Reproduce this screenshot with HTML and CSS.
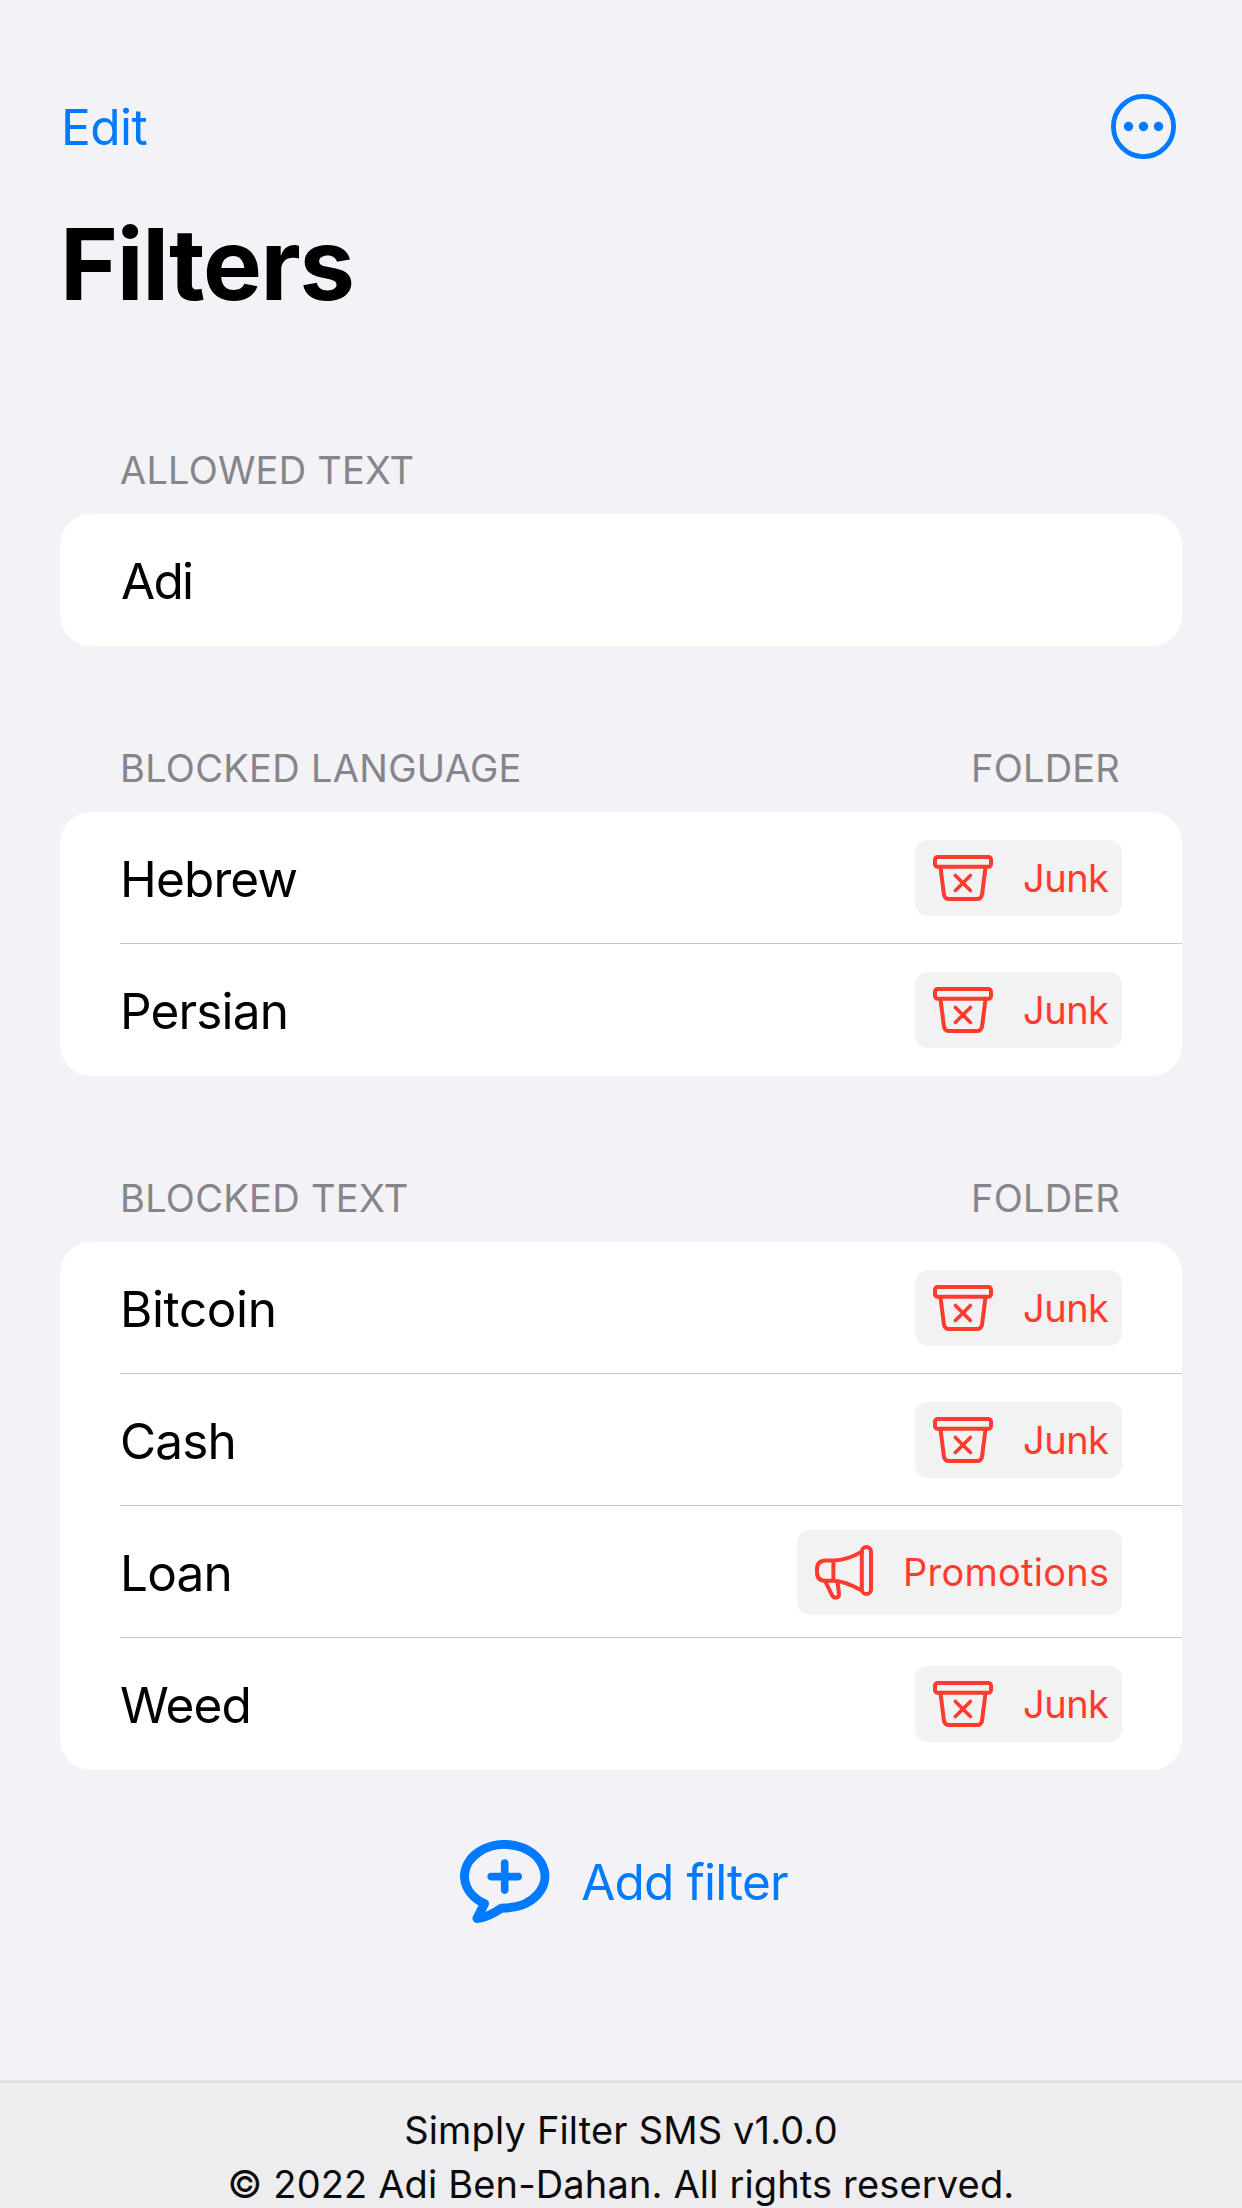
FILE: index.html
```
<!DOCTYPE html>
<html lang="en">
<head>
<meta charset="utf-8">
<title>Filters</title>
<link rel="stylesheet" href="styles.css">
</head>
<body>
<svg class="sprite" aria-hidden="true">
  <symbol id="bin" viewBox="0 0 60 46">
    <rect x="2" y="2" width="56" height="9.8" rx="2.6"/>
    <path d="M7.6 13 10.9 39.2Q11.5 44 16 44H44Q48.5 44 49.1 39.2L52.4 13"/>
    <path d="M22.4 20.4 37.4 35.4M37.4 20.4 22.4 35.4" stroke-width="3.6"/>
  </symbol>
  <symbol id="megaphone" viewBox="0 0 58 55">
    <rect x="46.8" y="2" width="9.2" height="47" rx="4.6"/>
    <path d="M46.8 6.6C39 11.2 29 15.4 18.6 15.4H11Q2 15.4 2 24V27.4Q2 35.8 11 35.8H18.6C29 35.8 39 41.2 46.8 45.6M18.4 15.4V35.8"/>
    <path d="M10.8 37.4 17 50.2Q18.3 52.8 20.8 52.8 24.6 52.4 24 48.6L22.6 37.6"/>
  </symbol>
</svg>
<div class="screen">
  <nav class="nav">
    <a class="edit">Edit</a>
    <svg class="more" viewBox="0 0 65 65">
      <circle class="ring" cx="32.5" cy="32.5" r="30.1"/>
      <circle cx="17.5" cy="32.5" r="4.7"/><circle cx="32.5" cy="32.5" r="4.7"/><circle cx="47.5" cy="32.5" r="4.7"/>
    </svg>
  </nav>
  <h1 class="title">Filters</h1>

  <section class="group">
    <header class="head"><span class="short">ALLOWED TEXT</span></header>
    <div class="card">
      <div class="row"><span class="name tight">Adi</span></div>
    </div>
  </section>

  <section class="group">
    <header class="head"><span>BLOCKED LANGUAGE</span><span class="short">FOLDER</span></header>
    <div class="card">
      <div class="row"><span class="name">Hebrew</span><span class="chip junk"><svg class="bin"><use href="#bin"/></svg>Junk</span></div>
      <div class="row"><span class="name">Persian</span><span class="chip junk"><svg class="bin"><use href="#bin"/></svg>Junk</span></div>
    </div>
  </section>

  <section class="group">
    <header class="head"><span>BLOCKED TEXT</span><span class="short">FOLDER</span></header>
    <div class="card">
      <div class="row"><span class="name loose">Bitcoin</span><span class="chip junk"><svg class="bin"><use href="#bin"/></svg>Junk</span></div>
      <div class="row"><span class="name">Cash</span><span class="chip junk"><svg class="bin"><use href="#bin"/></svg>Junk</span></div>
      <div class="row"><span class="name">Loan</span><span class="chip promo"><svg class="megaphone"><use href="#megaphone"/></svg>Promotions</span></div>
      <div class="row"><span class="name">Weed</span><span class="chip junk"><svg class="bin"><use href="#bin"/></svg>Junk</span></div>
    </div>
  </section>

  <div class="add">
    <svg class="bubble" viewBox="0 0 90 84">
      <path stroke-width="9" d="M44.7 67.9A40.2 31.7 0 1 0 24.5 63.6L17 78.4Q26 78.2 41.5 68.2Z"/>
      <path stroke-width="7.6" d="M31.2 36.6H58.2M44.7 23.1V50.1"/>
    </svg>
    <span>Add filter</span>
  </div>

  <footer class="footer">
    <div>Simply Filter SMS v1.0.0</div>
    <div class="legal">© 2022 Adi Ben-Dahan. All rights reserved.</div>
  </footer>
</div>
</body>
</html>
```
FILE: styles.css
```
* { box-sizing: border-box; }

body {
  margin: 0;
  background: #f2f2f7;
  color: #000;
  font-family: Inter, "Liberation Sans", sans-serif;
}

svg { display: block; flex: none; }
.sprite { display: none; }

.screen {
  display: flex;
  flex-direction: column;
  height: 2208px;
  padding: 61px 60px 0;
  overflow: hidden;
}

.nav {
  display: flex;
  align-items: center;
  justify-content: space-between;
  height: 132px;
  padding: 0 6px 0 1px;
  color: #007aff;
}
.edit { font-size: 49.5px; letter-spacing: -0.5px; }
.more { width: 65px; height: 65px; margin-bottom: 1px; fill: #007aff; }
.ring { fill: none; stroke: #007aff; stroke-width: 4.8; }

.title {
  margin: 11px 0 24px;
  font-size: 99px;
  font-weight: 700;
  line-height: 120px;
  letter-spacing: -1.4px;
}

.group { margin-top: 98px; }

.head {
  display: flex;
  justify-content: space-between;
  padding: 0 62px 20px 60px;
  color: #86858b;
  font-size: 38px;
  line-height: 48px;
  letter-spacing: 0.3px;
}
.short { letter-spacing: 0.2px; }

.card {
  border-radius: 31px;
  background: #fff;
  overflow: hidden;
}

.row {
  display: flex;
  align-items: center;
  justify-content: space-between;
  height: 132px;
  margin-left: 60px;
  padding-right: 60px;
}
.row:not(:last-child) { box-shadow: inset 0 -1px #c6c6c8; }

.name { padding-top: 2px; font-size: 49.5px; letter-spacing: -0.85px; }
.tight { padding-left: 1px; letter-spacing: -1.7px; }
.loose { letter-spacing: -0.4px; }

.chip {
  display: flex;
  align-items: center;
  border-radius: 13px;
  padding-left: 18px;
  background: #f2f2f2;
  color: #ff3b30;
  font-size: 38px;
}
.chip svg { fill: none; stroke: #ff3b30; stroke-width: 4; stroke-linecap: round; stroke-linejoin: round; }
.junk { width: 207px; height: 76px; gap: 30px; letter-spacing: -0.5px; }
.promo { width: 325px; height: 85px; gap: 30px; letter-spacing: 0.26px; }
.bin { width: 60px; height: 46px; }
.megaphone { width: 58px; height: 55px; }

.add {
  display: flex;
  align-items: center;
  justify-content: center;
  gap: 31px;
  margin-top: 70px;
  padding-left: 6px;
  height: 84px;
  color: #007aff;
  font-size: 49.5px;
  letter-spacing: -0.82px;
}
.bubble { width: 90px; height: 84px; fill: none; stroke: #007aff; stroke-linecap: round; stroke-linejoin: round; }

.footer {
  height: 128px;
  margin: auto -60px 0;
  border-top: 3px solid #e1e1e4;
  padding-top: 20px;
  background: #ededef;
  color: #0b0b0b;
  font-size: 38px;
  line-height: 54px;
  letter-spacing: 0.16px;
  text-align: center;
}
.legal { letter-spacing: 0.15px; }
```
